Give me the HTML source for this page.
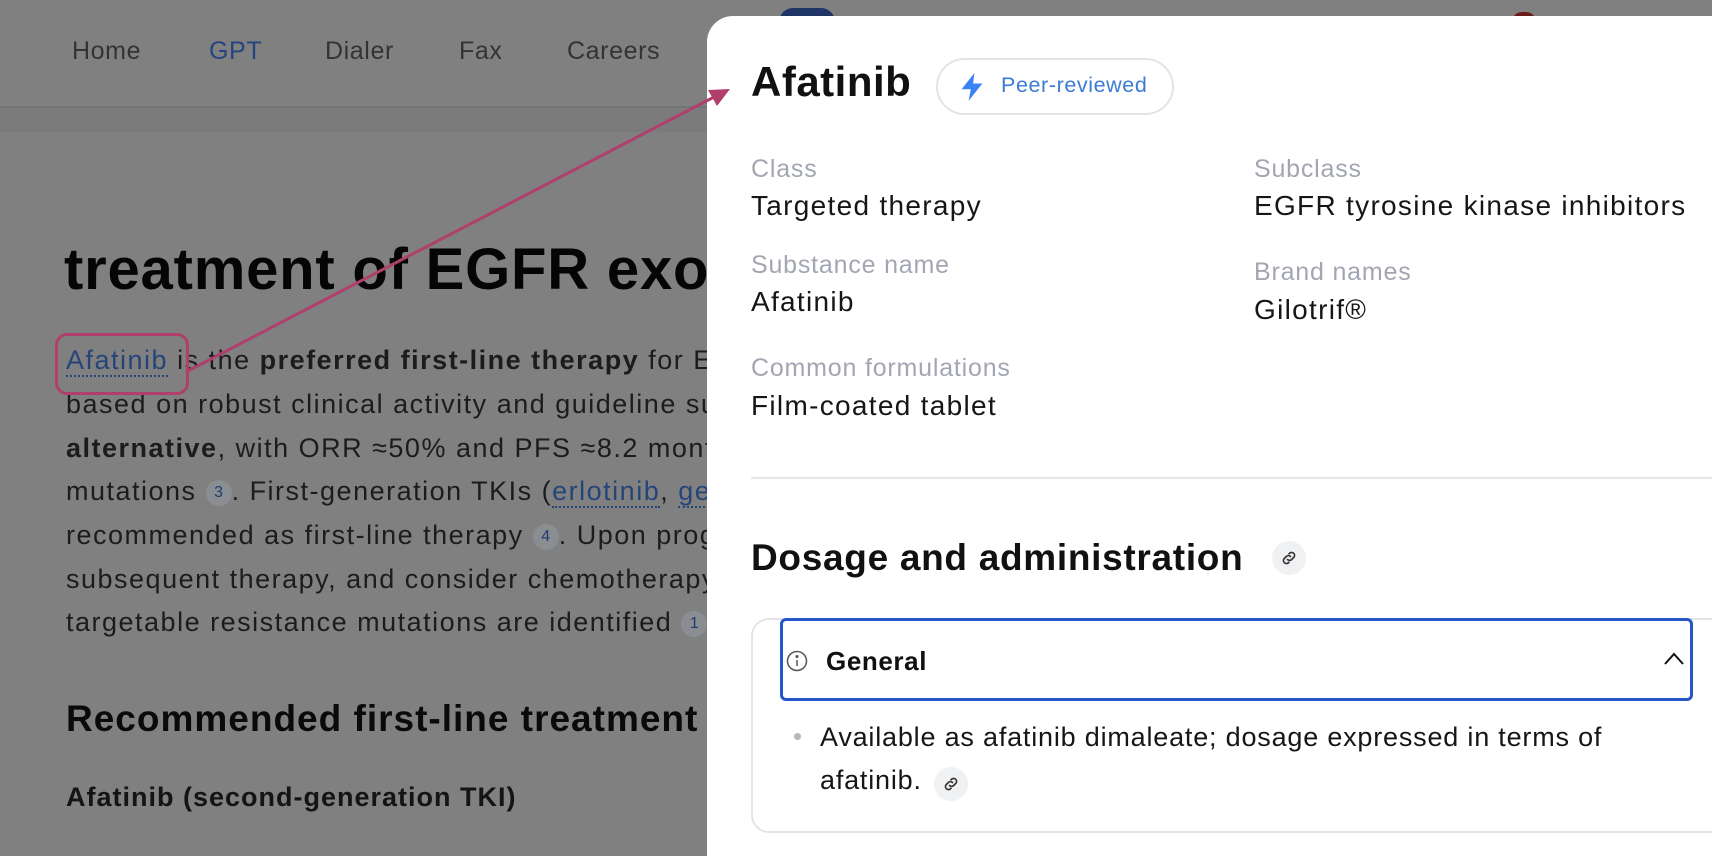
<!DOCTYPE html>
<html><head><meta charset="utf-8"><style>
*{margin:0;padding:0;box-sizing:border-box}
body{width:1712px;height:836px;overflow:hidden;background:#808080;font-family:"Liberation Sans",sans-serif;position:relative}
.a{position:absolute;white-space:nowrap}
.nav{font-size:25px;letter-spacing:0.6px;color:#333;top:37px}
.p{font-size:27px;letter-spacing:1.5px;color:#1c1c1c;left:66px}
.lk{color:#25457a;border-bottom:2px dotted #25457a}
.c{display:inline-block;width:26px;height:26px;border-radius:13px;background:#8a8d92;color:#1e3c70;font-size:16px;letter-spacing:0;text-align:center;line-height:26px;vertical-align:3px}
.lbl{font-size:25px;letter-spacing:0.8px;color:#a3a6b2}
.val{font-size:28px;letter-spacing:1.3px;color:#161616}
</style></head><body>
<div class="a" style="left:0;top:106px;width:1712px;height:2px;background:#747474"></div>
<div class="a" style="left:0;top:108px;width:1712px;height:24px;background:#7b7b7b"></div>
<div class="a nav" style="left:72px">Home</div>
<div class="a nav" style="left:209px;color:#22457f">GPT</div>
<div class="a nav" style="left:325px">Dialer</div>
<div class="a nav" style="left:459px">Fax</div>
<div class="a nav" style="left:567px">Careers</div>
<div class="a" style="left:779px;top:8px;width:56px;height:30px;border-radius:14px;background:#1f3566"></div>
<div class="a" style="left:1512px;top:12px;width:24px;height:20px;border-radius:12px;background:#6d1a1a"></div>

<div class="a" style="left:64px;top:236px;font-size:58px;letter-spacing:0.8px;font-weight:bold;color:#050505">treatment of EGFR exon 20</div>
<div class="a p" style="top:345px"><span class="lk">Afatinib</span> is the <b>preferred first-line therapy</b> for EGFR</div>
<div class="a p" style="top:389px">based on robust clinical activity and guideline support</div>
<div class="a p" style="top:433px"><b>alternative</b>, with ORR ≈50% and PFS ≈8.2 months</div>
<div class="a p" style="top:476px">mutations <span class="c">3</span>. First-generation TKIs (<span class="lk">erlotinib</span>, <span class="lk">gefitinib</span></div>
<div class="a p" style="top:520px">recommended as first-line therapy <span class="c">4</span>. Upon progression</div>
<div class="a p" style="top:564px">subsequent therapy, and consider chemotherapy</div>
<div class="a p" style="top:607px">targetable resistance mutations are identified <span class="c">1</span></div>
<div class="a" style="left:66px;top:698px;font-size:37px;letter-spacing:1px;font-weight:bold;color:#0a0a0a">Recommended first-line treatment</div>
<div class="a" style="left:66px;top:782px;font-size:27px;letter-spacing:1px;font-weight:bold;color:#141414">Afatinib (second-generation TKI)</div>

<div class="a" style="left:55px;top:333px;width:134px;height:62px;border:3px solid #b03f6c;border-radius:12px"></div>

<div class="a" style="left:707px;top:16px;width:1020px;height:840px;background:#fff;border-radius:26px 0 0 0"></div>
<svg class="a" style="left:0;top:0" width="760" height="400"><line x1="186" y1="372" x2="716" y2="96" stroke="#b03f6c" stroke-width="3"/><polygon points="730,89 708,90 717,106" fill="#b03f6c"/></svg>

<div class="a" style="left:751px;top:58px;font-size:42px;letter-spacing:0.5px;font-weight:bold;color:#111">Afatinib</div>
<div class="a" style="left:936px;top:58px;width:238px;height:57px;border:2px solid #e3e4e8;border-radius:29px"></div>
<svg class="a" style="left:958px;top:72px" width="28" height="30" viewBox="0 0 24 26"><path d="M14 1 L3 15 H11 L9 25 L21 10 H13 Z" fill="#3b82f6"/></svg>
<div class="a" style="left:1001px;top:73px;font-size:21.5px;letter-spacing:0.6px;color:#3a7bd5">Peer-reviewed</div>

<div class="a lbl" style="left:751px;top:155px">Class</div>
<div class="a val" style="left:751px;top:190px">Targeted therapy</div>
<div class="a lbl" style="left:1254px;top:155px">Subclass</div>
<div class="a val" style="left:1254px;top:190px">EGFR tyrosine kinase inhibitors</div>
<div class="a lbl" style="left:751px;top:251px">Substance name</div>
<div class="a val" style="left:751px;top:286px">Afatinib</div>
<div class="a lbl" style="left:1254px;top:258px">Brand names</div>
<div class="a val" style="left:1254px;top:294px">Gilotrif®</div>
<div class="a lbl" style="left:751px;top:354px">Common formulations</div>
<div class="a val" style="left:751px;top:390px">Film-coated tablet</div>
<div class="a" style="left:751px;top:477px;width:961px;height:2px;background:#e6e7ea"></div>

<div class="a" style="left:751px;top:537px;font-size:37px;letter-spacing:0.7px;font-weight:bold;color:#111">Dosage and administration</div>
<div class="a" style="left:1272px;top:541px;width:34px;height:34px;border-radius:17px;background:#f0f1f3"></div>
<svg class="a" style="left:1280px;top:549px" width="18" height="18" viewBox="0 0 24 24" fill="none" stroke="#333" stroke-width="2.2" stroke-linecap="round"><path d="M10 14a4 4 0 0 0 5.6 0l3-3a4 4 0 0 0-5.6-5.6l-1 1"/><path d="M14 10a4 4 0 0 0-5.6 0l-3 3a4 4 0 0 0 5.6 5.6l1-1"/></svg>

<div class="a" style="left:751px;top:618px;width:990px;height:215px;border:2px solid #e3e4e8;border-radius:18px"></div>
<div class="a" style="left:780px;top:618px;width:913px;height:83px;border:3px solid #2457c5;border-radius:6px"></div>
<svg class="a" style="left:786px;top:650px" width="22" height="22" viewBox="0 0 22 22" fill="none" stroke="#555" stroke-width="1.5"><circle cx="11" cy="11" r="9.5"/><line x1="11" y1="10" x2="11" y2="16"/><circle cx="11" cy="6.5" r="0.8" fill="#555"/></svg>
<div class="a" style="left:826px;top:646px;font-size:26px;letter-spacing:0.6px;font-weight:bold;color:#111">General</div>
<svg class="a" style="left:1662px;top:650px" width="24" height="18" viewBox="0 0 24 18" fill="none" stroke="#111" stroke-width="2"><path d="M3 14 L12 4 L21 14"/></svg>
<div class="a" style="left:794px;top:733px;width:7px;height:7px;border-radius:4px;background:#b4b6bd"></div>
<div class="a" style="left:820px;top:722px;font-size:27px;letter-spacing:0.8px;color:#161616">Available as afatinib dimaleate; dosage expressed in terms of</div>
<div class="a" style="left:820px;top:765px;font-size:27px;letter-spacing:0.8px;color:#161616">afatinib.</div>
<div class="a" style="left:934px;top:767px;width:34px;height:34px;border-radius:17px;background:#f0f1f3"></div>
<svg class="a" style="left:942px;top:775px" width="18" height="18" viewBox="0 0 24 24" fill="none" stroke="#333" stroke-width="2.2" stroke-linecap="round"><path d="M10 14a4 4 0 0 0 5.6 0l3-3a4 4 0 0 0-5.6-5.6l-1 1"/><path d="M14 10a4 4 0 0 0-5.6 0l-3 3a4 4 0 0 0 5.6 5.6l1-1"/></svg>
</body></html>
